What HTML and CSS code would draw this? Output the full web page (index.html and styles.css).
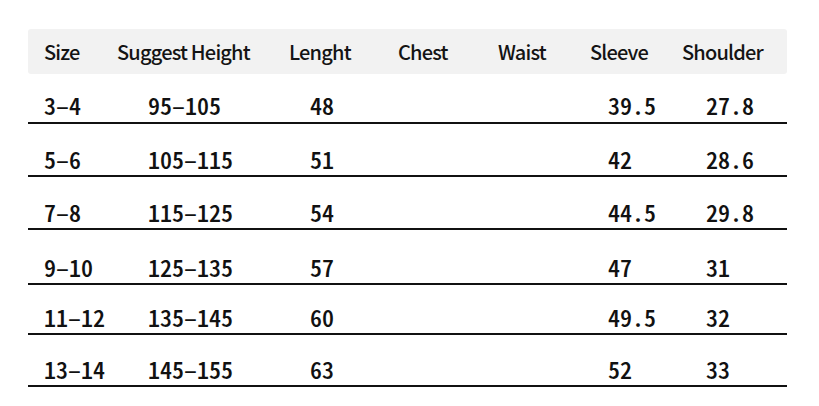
FILE: index.html
```html
<!DOCTYPE html>
<html>
<head>
<meta charset="utf-8">
<link rel="stylesheet" href="styles.css">
</head>
<body>
<div class="table">
  <div class="head">
    <span>Size</span><span>Suggest Height</span><span>Lenght</span><span>Chest</span><span>Waist</span><span>Sleeve</span><span>Shoulder</span>
  </div>
  <div class="row r1"><span>3–4</span><span>95–105</span><span>48</span><span>39.5</span><span>27.8</span></div>
  <div class="row r2"><span>5–6</span><span>105–115</span><span>51</span><span>42</span><span>28.6</span></div>
  <div class="row r3"><span>7–8</span><span>115–125</span><span>54</span><span>44.5</span><span>29.8</span></div>
  <div class="row r4"><span>9–10</span><span>125–135</span><span>57</span><span>47</span><span>31</span></div>
  <div class="row r5"><span>11–12</span><span>135–145</span><span>60</span><span>49.5</span><span>32</span></div>
  <div class="row r6"><span>13–14</span><span>145–155</span><span>63</span><span>52</span><span>33</span></div>
</div>
</body>
</html>
```
FILE: styles.css
```css
html, body { margin: 0; padding: 0; background: #fff; }
body { width: 819px; height: 406px; overflow: hidden; }
.table { margin: 29px 0 0 28px; width: 759px; }
.head {
  height: 45px;
  background: #f2f2f2;
  border-radius: 3px;
  display: grid;
  grid-template-columns: 73px 172px 109px 100px 92px 92px 1fr;
  align-items: center;
  padding-left: 16px;
  box-sizing: border-box;
  font-family: "Noto Sans CJK SC", "Noto Sans", sans-serif;
  font-size: 20px;
  font-weight: 500;
  letter-spacing: -0.8px;
  color: #141414;
}
.row {
  display: grid;
  grid-template-columns: 104px 162px 298px 98px 1fr;
  align-items: end;
  padding-left: 16px;
  padding-bottom: 4px;
  box-sizing: border-box;
  border-bottom: 2px solid #111;
  font-family: "Noto Sans CJK SC", sans-serif;
  font-feature-settings: "hwid";
  font-size: 24px;
  font-weight: 500;
  line-height: 24px;
  color: #111;
}
.r1 { height: 50px; padding-bottom: 5px; }
.r2 { height: 53px; }
.r3 { height: 53px; }
.r4 { height: 55px; }
.r5 { height: 50px; }
.r6 { height: 52px; }
```
